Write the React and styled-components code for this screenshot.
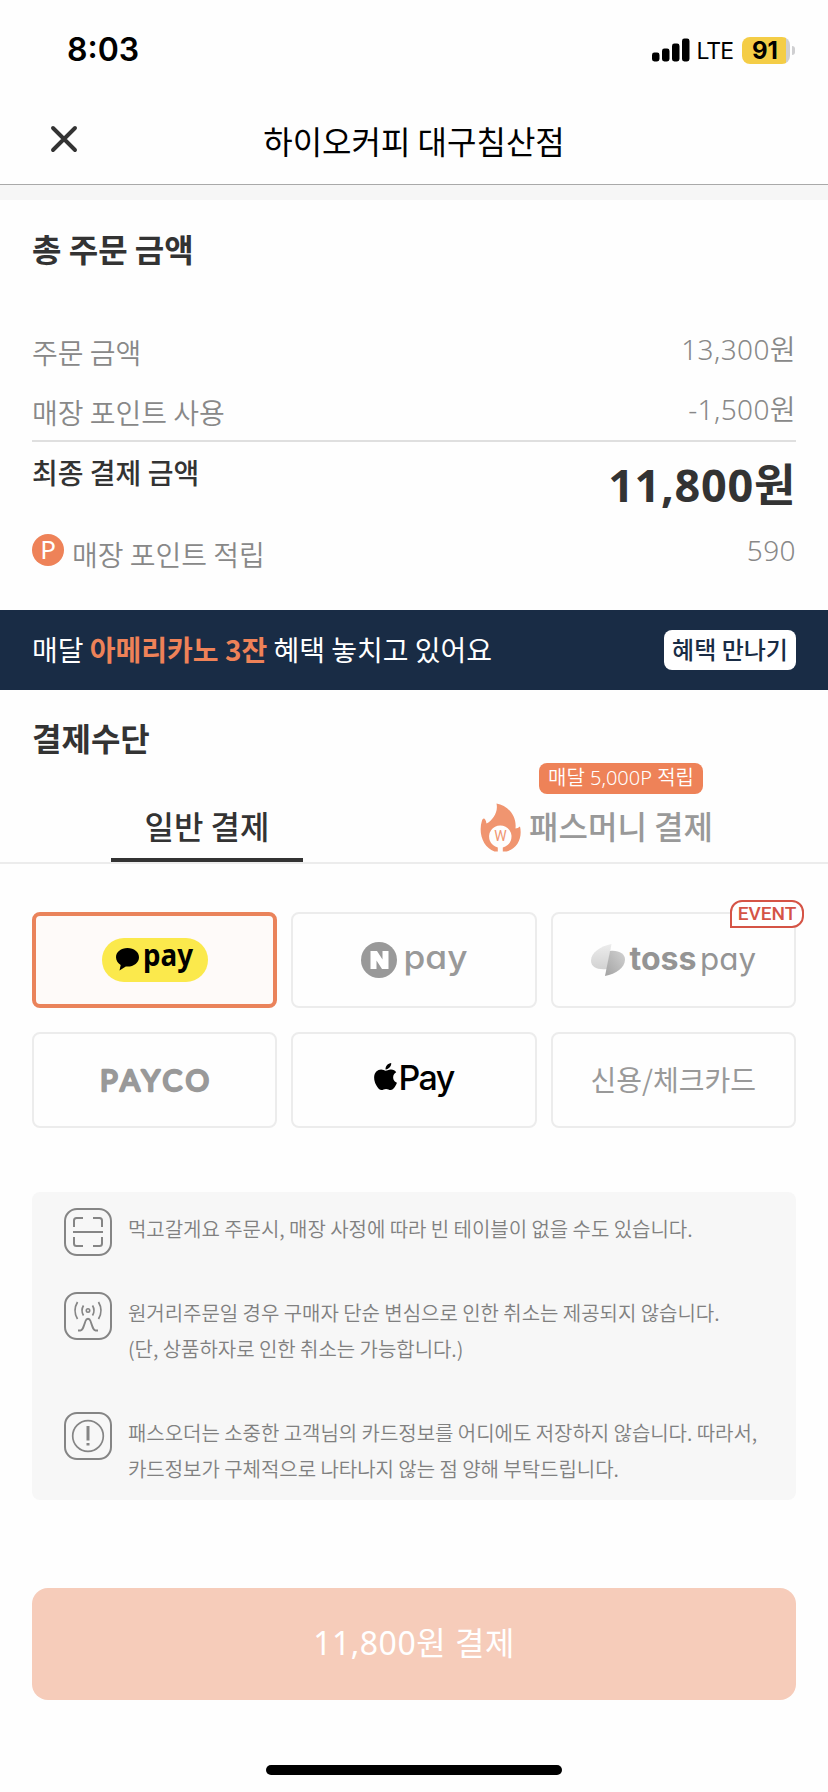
import { useState } from "react";
import styled, { createGlobalStyle } from "styled-components";
import { FaApple } from "react-icons/fa";

const GlobalStyle = createGlobalStyle`
    * {
        box-sizing: border-box;
    }

    body {
        margin: 0;
        background: #fefefe;
        color: #333;
        font-family: 'Noto Sans CJK KR', sans-serif;
        -webkit-font-smoothing: antialiased;
    }

    button {
        border: 0;
        padding: 0;
        background: none;
        color: inherit;
        font: inherit;
    }
`;

const Page = styled.div`
    display: flex;
    flex-direction: column;
    width: 828px;
    height: 1792px;
    margin: 0 auto;
    overflow: hidden;
`;

const StatusBar = styled.div`
    display: flex;
    justify-content: space-between;
    height: 96px;
    padding: 29px 33px 0 67px;
    color: #000;
    font-family: Inter, sans-serif;
`;

const Clock = styled.span`
    font-size: 32px;
    font-weight: 600;
    line-height: 42px;
`;

const StatusIcons = styled.div`
    display: flex;
    align-items: center;
    height: 42px;
`;

const Network = styled.span`
    margin: 1px 9px 0 7px;
    font-size: 23px;
    letter-spacing: -1px;
`;

const Battery = styled.div`
    width: 48px;
    height: 27px;
    padding-right: 2px;
    border-radius: 8px;
    background: linear-gradient(to right, #f4cd46 44px, #cfcfd1 44px);
    font-size: 24px;
    font-weight: 700;
    line-height: 27px;
    text-align: center;
`;

const BatteryCap = styled.div`
    width: 3px;
    height: 9px;
    margin-left: 2px;
    border-radius: 0 4px 4px 0;
    background: #cfcfd1;
`;

const Header = styled.header`
    display: grid;
    grid-template-columns: 78px 1fr 78px;
    align-items: center;
    height: 104px;
    padding: 0 25px 2px;
    border-bottom: 15px solid #f6f6f6;
    box-shadow: inset 0 -1px 0 #a9a9a9;
`;

const CloseButton = styled.button`
    display: flex;
    padding: 0 0 2px 25px;
`;

const StoreName = styled.h1`
    margin: 0;
    color: #000;
    font-size: 32px;
    font-weight: 400;
    line-height: 48px;
    text-align: center;
`;

const Summary = styled.section`
    height: 410px;
    padding: 24px 32px 0;
`;

const SectionTitle = styled.h2`
    margin: 0;
    font-size: 32px;
    font-weight: 700;
    line-height: 48px;
`;

const PriceList = styled.div`
    padding-top: 48px;
    border-bottom: 2px solid #dfdfdf;
`;

const Row = styled.div`
    display: flex;
    justify-content: space-between;
    align-items: ${props => props.$top ? 'flex-start' : 'center'};
    height: ${props => props.$height || 60}px;
    color: #888;
    font-size: 28px;
    font-weight: 350;
    line-height: 42px;
`;

const Label = styled.span`
    padding-top: 4px;
`;

const Amount = styled.span`
    padding-bottom: ${props => props.$low ? 0 : 3}px;
    font-family: 'Noto Sans', 'Noto Sans CJK KR', sans-serif;
    letter-spacing: 0.4px;
`;

const FinalLabel = styled.strong`
    padding-top: 9px;
    color: #333;
    font-weight: 500;
`;

const FinalAmount = styled.strong`
    padding-top: 13px;
    color: #333;
    font-family: 'Noto Sans', 'Noto Sans CJK KR', sans-serif;
    font-size: 45px;
    font-weight: 700;
    line-height: 60px;
    letter-spacing: 0.7px;
`;

const PointLabel = styled.div`
    display: flex;
    align-items: center;
    gap: 8px;
`;

const PointIcon = styled.span`
    width: 32px;
    height: 32px;
    border-radius: 50%;
    background: #ee8258;
    color: #fff;
    font-family: 'Noto Sans', sans-serif;
    font-size: 26px;
    font-weight: 400;
    line-height: 30px;
    text-align: center;
`;

const PointText = styled.span`
    padding-top: 8px;
`;

const Banner = styled.div`
    display: flex;
    justify-content: space-between;
    align-items: center;
    height: 80px;
    padding: 0 32px;
    background: #192c45;
    color: #fff;
    font-size: 28px;
    font-weight: 400;
    line-height: 40px;

    em {
        color: #ee8258;
        font-style: normal;
        font-weight: 700;
    }
`;

const BannerText = styled.span`
    padding-bottom: 3px;
`;

const BannerButton = styled.button`
    width: 132px;
    height: 40px;
    padding-bottom: 3px;
    border-radius: 8px;
    background: #fff;
    color: #192c45;
    font-size: 24px;
    font-weight: 500;
    line-height: 36px;
    white-space: nowrap;
`;

const Methods = styled.section`
    padding-top: 23px;
`;

const MethodsTitle = styled(SectionTitle)`
    padding-left: 32px;
`;

const Tabs = styled.div`
    display: flex;
    height: 103px;
    border-bottom: 2px solid #ececec;
`;

const Tab = styled.button`
    position: relative;
    display: flex;
    flex: none;
    justify-content: center;
    align-items: center;
    gap: 8px;
    width: 50%;
    padding: 26px ${props => props.$icon ? 49 : 0}px 0 0;
    color: ${props => props.$active ? '#333' : '#999'};
    font-size: 32px;
    font-weight: 500;

    svg {
        margin-top: 6px;
    }

    &::after {
        content: '';
        position: absolute;
        bottom: 0;
        left: 111px;
        width: 192px;
        height: 4px;
        background: ${props => props.$active ? '#333' : 'transparent'};
    }
`;

const TabBadge = styled.span`
    position: absolute;
    top: 2px;
    left: 125px;
    width: 164px;
    height: 31px;
    border-radius: 8px;
    background: #ee8258;
    color: #fff;
    font-family: 'Noto Sans', 'Noto Sans CJK KR', sans-serif;
    font-size: 20px;
    font-weight: 350;
    line-height: 29px;
`;

const CardGrid = styled.div`
    display: grid;
    grid-template-columns: repeat(3, 1fr);
    gap: 24px 14px;
    padding: 48px 32px 0;
`;

const PayCard = styled.button`
    position: relative;
    display: flex;
    justify-content: center;
    align-items: center;
    height: 96px;
    border: ${props => props.$active ? '4px solid #ea835b' : '2px solid #ececec'};
    border-radius: 8px;
    background: ${props => props.$active ? '#fefaf9' : '#fefefe'};
    color: #999;
    font-size: 28px;
    font-weight: 400;
`;

const CardName = styled.span`
    padding-bottom: 2px;
`;

const EventBadge = styled.span`
    position: absolute;
    top: -14px;
    right: -10px;
    width: 74px;
    height: 28px;
    border: 2px solid #d55446;
    border-radius: 12px 12px 12px 0;
    background: #fff;
    color: #d55446;
    font-family: Roboto, sans-serif;
    font-size: 19px;
    font-weight: 500;
    line-height: 24px;
    text-align: center;
`;

const ApplePay = styled.span`
    display: flex;
    align-items: center;
    padding-bottom: 4px;
    color: #000;
    font-family: Inter, sans-serif;
    font-size: 34px;
    font-weight: 500;
    line-height: 40px;
    letter-spacing: -1.6px;

    svg {
        margin: 0 -3px 3px -4px;
    }
`;

const Notices = styled.ul`
    height: 308px;
    margin: 64px 32px 0;
    padding: 16px 32px 0;
    border-radius: 8px;
    background: #f7f7f7;
    list-style: none;
`;

const Notice = styled.li`
    display: flex;
    gap: 16px;
    height: ${props => props.$lines > 1 ? 120 : 84}px;
    color: #808080;
    font-size: 20px;
    font-weight: 350;
    line-height: 36px;
    white-space: pre-line;

    svg {
        flex: none;
    }

    p {
        margin: 3px 0 0;
        letter-spacing: -0.04px;
    }
`;

const PayButton = styled.button`
    height: 112px;
    margin: 88px 32px 0;
    padding-bottom: 6px;
    border-radius: 16px;
    background: #f6ccba;
    color: #fff;
    font-family: 'Noto Sans', 'Noto Sans CJK KR', sans-serif;
    font-size: 32px;
    font-weight: 400;
    letter-spacing: 0.5px;
`;

const HomeBar = styled.div`
    width: 296px;
    height: 10px;
    margin: 65px auto 0;
    border-radius: 5px;
    background: #000;
`;

const Signal = () => (
    <svg width="38" height="24" viewBox="0 0 38 24">
        <rect x="0" y="14.5" width="7.5" height="9" rx="2.4" />
        <rect x="10" y="10.5" width="7.5" height="13" rx="2.4" />
        <rect x="20" y="5.5" width="7.5" height="18" rx="2.4" />
        <rect x="30" y="0.5" width="7.5" height="23" rx="2.4" />
    </svg>
);

const Flame = () => (
    <svg width="41" height="49" viewBox="0 0 41 49">
        <path
            fill="#f09570"
            d="M16.5 0.5C27 2 37 12 35.5 25.500C37 25.500 38.500 24.500 40 23.500C42.500 34 38 45.500 26.500 48.500L22.800 48.500V44.500A11.200 11.200 0 1 0 17.800 44.500V48.500H14.500C3 44.500-2 30 2 17.500C3 14.500 5.500 14.500 6.500 20.500C12.500 17.500 18.500 9 16.500 0.500Z"
        />
        <text x="20.500" y="38" textAnchor="middle" fontFamily="Roboto, sans-serif" fontSize="14" fontWeight="400" fill="#f09570">W</text>
    </svg>
);

const KakaoPay = () => (
    <svg width="106" height="64" viewBox="0 -10 106 64">
        <rect width="106" height="44" rx="22" fill="#fbe94c" />
        <path d="M25.500 10C19 10 14 14 14 19.200C14 22.500 16 25.300 18.700 27L17.500 32.500L23.800 28.500C31 29.300 37 25 37 19.200C37 14 32 10 25.500 10Z" />
        <text x="41" y="27.500" textLength="50" lengthAdjust="spacingAndGlyphs" fontFamily="'Noto Sans', sans-serif" fontSize="30" fontWeight="700">pay</text>
    </svg>
);

const NaverPay = () => (
    <svg width="112" height="64" viewBox="-3 -10 112 64">
        <circle cx="18" cy="22" r="18" fill="#999" />
        <path fill="#fff" d="M9.500 13H16L21.500 21.500V13H27.500V31H21L15.500 22.500V31H9.500Z" />
        <text
            x="42.500"
            y="30.500"
            textLength="64"
            lengthAdjust="spacingAndGlyphs"
            fontFamily="Inter, sans-serif"
            fontSize="33"
            fontWeight="500"
            fill="#999"
            style={{ fontFeatureSettings: "'cv11'" }}
        >pay</text>
    </svg>
);

const TossPay = () => (
    <svg width="170" height="64" viewBox="-2 -10 170 64">
        <defs>
            <linearGradient id="tossLeft" x1="0" y1="0" x2="0" y2="1">
                <stop offset="0" stopColor="#ececec" />
                <stop offset="1" stopColor="#d2d2d2" />
            </linearGradient>
            <linearGradient id="tossRight" x1="1" y1="0" x2="0" y2="1">
                <stop offset="0" stopColor="#d2d2d2" />
                <stop offset="1" stopColor="#a2a2a2" />
            </linearGradient>
        </defs>
        <path fill="url(#tossLeft)" d="M21.500 6C11 8 1 14.500 1 22.500C1 29 7 32 17 31Z" />
        <path fill="url(#tossRight)" d="M20 13C29 12 35 16 35 21.500C35 29.500 26 36 15 38Z" />
        <text x="39.500" y="32" textLength="67" lengthAdjust="spacingAndGlyphs" fontFamily="Inter, sans-serif" fontSize="32" fontWeight="700" fill="#949494">toss</text>
        <text
            x="110"
            y="32"
            textLength="56"
            lengthAdjust="spacingAndGlyphs"
            fontFamily="Inter, sans-serif"
            fontSize="31"
            fontWeight="400"
            fill="#949494"
            style={{ fontFeatureSettings: "'cv11'" }}
        >pay</text>
    </svg>
);

const Payco = () => (
    <svg width="116" height="48" viewBox="-4 -8 116 48">
        <text
            x="-1"
            y="27"
            textLength="109"
            lengthAdjust="spacing"
            fontFamily="Lato, sans-serif"
            fontSize="29.500"
            fontWeight="400"
            fill="#999"
            stroke="#999"
            strokeWidth="2.400"
            strokeLinejoin="round"
        >PAYCO</text>
    </svg>
);

const NoticeIcon = ({ type }) => (
    <svg width="48" height="48" viewBox="0 0 48 48" fill="none" stroke="#858585" strokeWidth="2">
        <rect x="1" y="1" width="46" height="46" rx="12" />
        {type === 'scan' && (
            <path d="M10 19V12.500A2.500 2.500 0 0 1 12.500 10H19M29 10H35.500A2.500 2.500 0 0 1 38 12.500V19M38 29V35.500A2.500 2.500 0 0 1 35.500 38H29M19 38H12.500A2.500 2.500 0 0 1 10 35.500V29M9 24H39" />
        )}
        {type === 'antenna' && (
            <>
                <circle cx="24" cy="18.500" r="1.700" strokeWidth="1.600" />
                <path d="M19.500 13.500Q16.500 18.500 19.500 23.500M28.500 13.500Q31.500 18.500 28.500 23.500M13.500 10Q8.500 18.500 13.500 27M34.500 10Q39.500 18.500 34.500 27" strokeWidth="1.700" />
                <path d="M14 38.500H16.500C18.500 38.500 19 36.500 21.500 29C22.500 26 25.500 26 26.500 29C29 36.500 29.500 38.500 31.500 38.500H34" strokeWidth="1.800" />
            </>
        )}
        {type === 'alert' && (
            <>
                <circle cx="24" cy="24" r="15.300" strokeWidth="1.700" />
                <path d="M24 14V28.500M24 31V33.500" strokeWidth="3" />
            </>
        )}
    </svg>
);

// 결제수단 목록
const payMethods = [
    { id: 'kakao', logo: <KakaoPay /> },
    { id: 'naver', logo: <NaverPay /> },
    { id: 'toss', logo: <TossPay />, event: true },
    { id: 'payco', logo: <Payco /> },
    { id: 'apple', logo: <ApplePay><FaApple size={31} />Pay</ApplePay> },
    { id: 'card', logo: <CardName>신용/체크카드</CardName> },
];

// 주문 안내사항
const notices = [
    { type: 'scan', lines: 1, text: '먹고갈게요 주문시, 매장 사정에 따라 빈 테이블이 없을 수도 있습니다.' },
    { type: 'antenna', lines: 2, text: '원거리주문일 경우 구매자 단순 변심으로 인한 취소는 제공되지 않습니다.\n(단, 상품하자로 인한 취소는 가능합니다.)' },
    { type: 'alert', lines: 2, text: '패스오더는 소중한 고객님의 카드정보를 어디에도 저장하지 않습니다. 따라서,\n카드정보가 구체적으로 나타나지 않는 점 양해 부탁드립니다.' },
];

const App = () => {
    const [tab, setTab] = useState('normal');
    const [method, setMethod] = useState('kakao');

    return (
        <Page>
            <GlobalStyle />
            <StatusBar>
                <Clock>8:03</Clock>
                <StatusIcons>
                    <Signal />
                    <Network>LTE</Network>
                    <Battery>91</Battery>
                    <BatteryCap />
                </StatusIcons>
            </StatusBar>
            <Header>
                <CloseButton aria-label="닫기">
                    <svg width="28" height="28" viewBox="0 0 28 28" stroke="#333" strokeWidth="3.900" strokeLinecap="round">
                        <path d="M3 3L25 25M25 3L3 25" />
                    </svg>
                </CloseButton>
                <StoreName>하이오커피 대구침산점</StoreName>
            </Header>
            <Summary>
                <SectionTitle>총 주문 금액</SectionTitle>
                <PriceList>
                    <Row>
                        <Label>주문 금액</Label>
                        <Amount>13,300원</Amount>
                    </Row>
                    <Row>
                        <Label>매장 포인트 사용</Label>
                        <Amount>-1,500원</Amount>
                    </Row>
                </PriceList>
                <Row $top $height={76}>
                    <FinalLabel>최종 결제 금액</FinalLabel>
                    <FinalAmount>11,800원</FinalAmount>
                </Row>
                <Row $height={64}>
                    <PointLabel>
                        <PointIcon>P</PointIcon>
                        <PointText>매장 포인트 적립</PointText>
                    </PointLabel>
                    <Amount $low>590</Amount>
                </Row>
            </Summary>
            <Banner>
                <BannerText>매달 <em>아메리카노 3잔</em> 혜택 놓치고 있어요</BannerText>
                <BannerButton>혜택 만나기</BannerButton>
            </Banner>
            <Methods>
                <MethodsTitle>결제수단</MethodsTitle>
                <Tabs>
                    <Tab $active={tab === 'normal'} onClick={() => setTab('normal')}>일반 결제</Tab>
                    <Tab $icon $active={tab === 'pass'} onClick={() => setTab('pass')}>
                        <TabBadge>매달 5,000P 적립</TabBadge>
                        <Flame />
                        패스머니 결제
                    </Tab>
                </Tabs>
                <CardGrid>
                    {
                        payMethods.map(m => (
                            <PayCard key={m.id} $active={method === m.id} onClick={() => setMethod(m.id)}>
                                {m.logo}
                                {m.event && <EventBadge>EVENT</EventBadge>}
                            </PayCard>
                        ))
                    }
                </CardGrid>
            </Methods>
            <Notices>
                {
                    notices.map(n => (
                        <Notice key={n.type} $lines={n.lines}>
                            <NoticeIcon type={n.type} />
                            <p>{n.text}</p>
                        </Notice>
                    ))
                }
            </Notices>
            <PayButton>11,800원 결제</PayButton>
            <HomeBar />
        </Page>
    )
}

export default App
